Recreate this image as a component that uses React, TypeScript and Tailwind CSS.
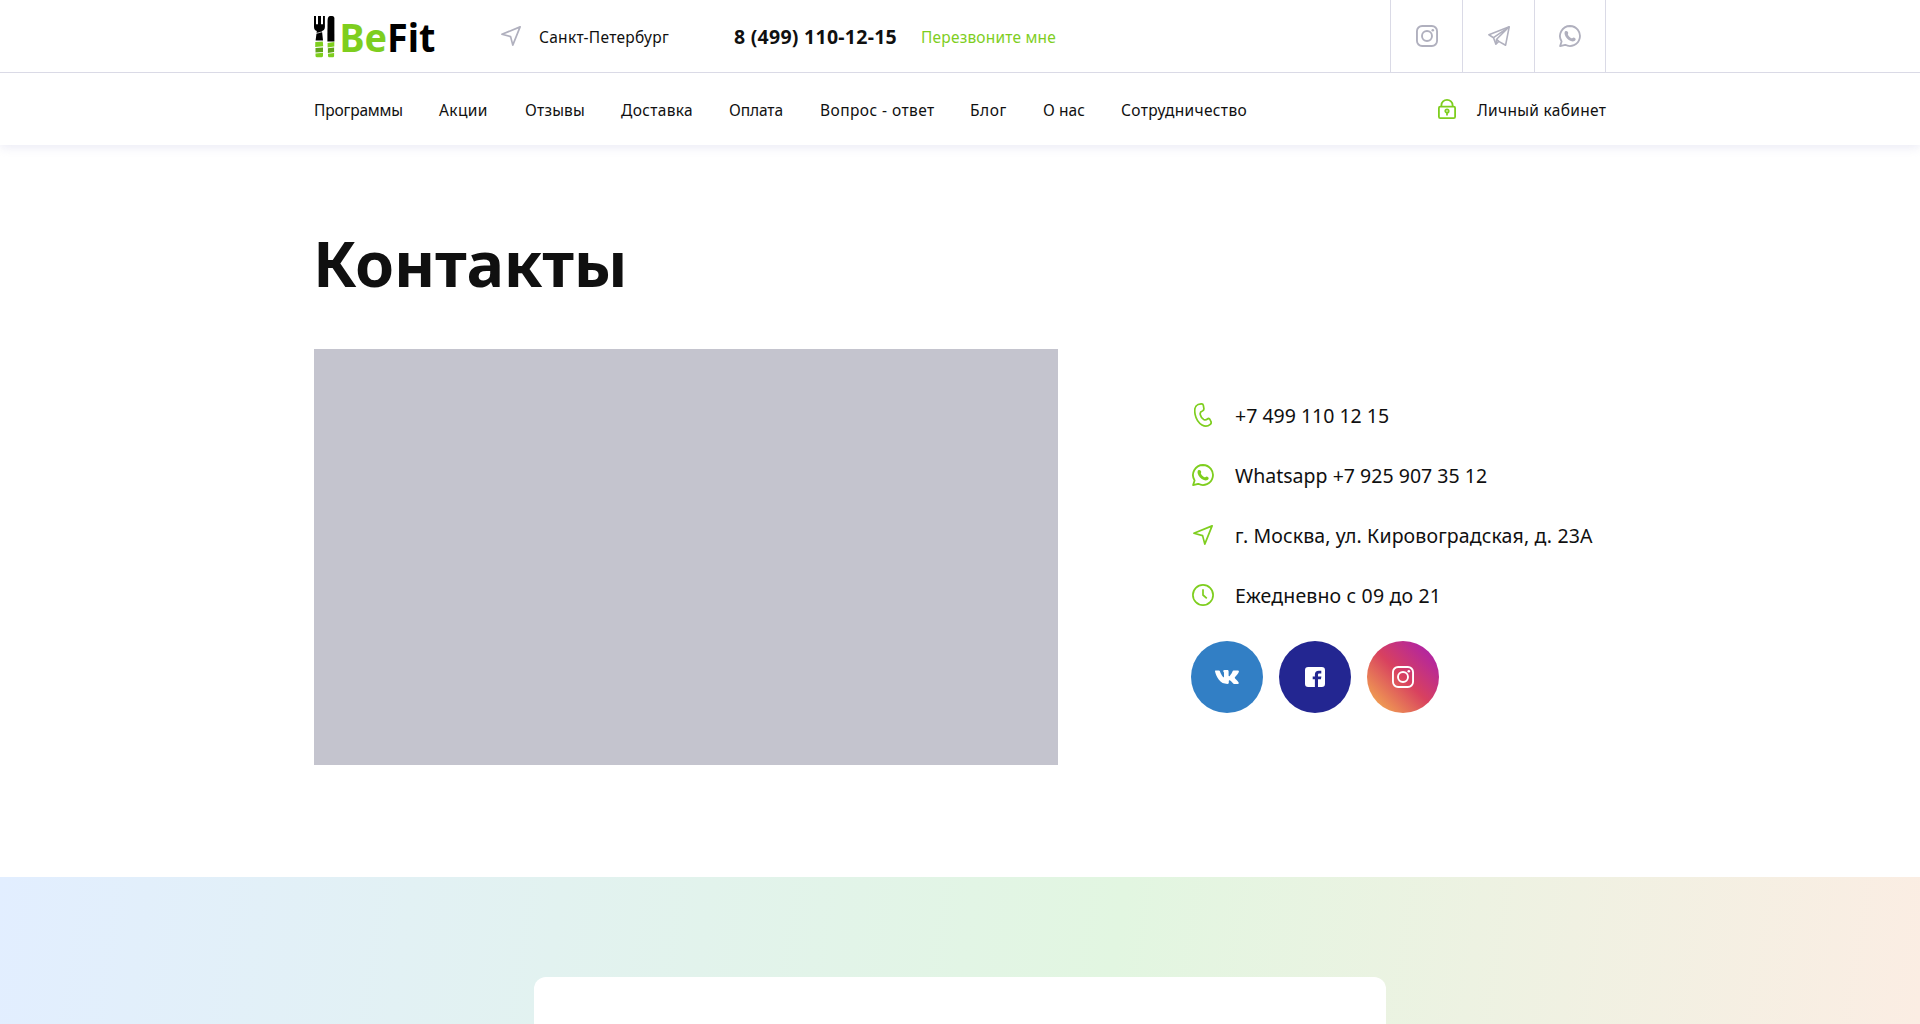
import type { ReactNode } from 'react';

function Instagram() {
  return (
    <svg width="22" height="22" viewBox="0 0 22 22" fill="none" stroke="currentColor" strokeWidth="1.9">
      <rect x="0.95" y="0.95" width="20.1" height="20.1" rx="5.2" />
      <circle cx="11" cy="11" r="5" />
      <circle cx="16.8" cy="5.2" r="1.3" fill="currentColor" stroke="none" />
    </svg>
  );
}

function Whatsapp() {
  return (
    <svg width="22" height="22" viewBox="0 0 22 22" fill="none">
      <path
        d="M11 1A10 10 0 1 1 6.2 19.8L1.1 21.1L2.6 16.4A10 10 0 0 1 11 1Z"
        stroke="currentColor"
        strokeWidth="1.8"
        strokeLinejoin="round"
      />
      <path
        d="M6.6 6.1C8 5.4 9.4 7.2 9.2 8.2C9 9.2 8.6 9.4 9.2 10.3C10 11.8 11.2 12.8 12.5 13.2C13.3 13.5 13.7 12.5 14.6 12.4C15.5 12.3 17.1 13.5 16.6 14.7C15.9 16.3 13.9 16.8 11.9 16C8.8 14.9 6.7 12.5 5.8 9.8C5.3 8.2 5.5 6.7 6.6 6.1Z"
        fill="currentColor"
      />
    </svg>
  );
}

function Telegram() {
  return (
    <svg width="22" height="20" viewBox="0 0 22 20" fill="none" stroke="currentColor" strokeWidth="1.6" strokeLinejoin="round">
      <path d="M21.2 0.8L0.9 8.8L5.5 11.7L7.9 18.1L10.7 15.4L17.6 19.2Z" />
      <path d="M21.2 0.8L5.5 11.7M21.2 0.8L8.6 13.3L7.9 18.1M8.6 13.3L10.7 15.4" />
    </svg>
  );
}

function Location() {
  return (
    <svg width="20" height="20" viewBox="0 0 20 20" fill="none" stroke="currentColor" strokeWidth="1.7" strokeLinejoin="round">
      <path d="M19.1 0.9L0.9 8.3L9.6 10.6L11.8 19.1Z" />
    </svg>
  );
}

function Lock() {
  return (
    <svg width="18" height="20" viewBox="0 0 18 20" fill="none" stroke="currentColor" strokeWidth="1.8">
      <rect x="0.9" y="7.7" width="16.2" height="11.4" rx="1.4" />
      <path d="M3.4 7.8V6.2A5.6 5.3 0 0 1 14.6 6.2V7.8" />
      <circle cx="9" cy="12" r="1.7" />
      <path d="M9 13.6V16.6" />
    </svg>
  );
}

function Phone() {
  return (
    <svg width="18" height="24" viewBox="0 0 18 24" fill="none" stroke="currentColor" strokeWidth="1.7" strokeLinejoin="round">
      <path d="M4.1 1.5L7.2 0.9C8.5 0.7 9.2 1.5 9.4 2.6L9.9 5.6C10 6.9 9.4 7.6 8.4 8C6.5 8.7 5.8 9.8 6.3 11.7C6.8 13.7 8.1 15.6 9.7 16.5C11.2 17.3 12.3 17 13.4 16C14.2 15.3 15 15.4 15.7 16.1L16.8 18.2C17.5 19.4 17.2 20.5 16.3 21.3C13.9 23.4 10.8 23.6 8 21.9C4.7 19.9 2 15.7 1.1 11.3C0.3 7.3 0.9 2.9 4.1 1.5Z" />
    </svg>
  );
}

function Clock() {
  return (
    <svg width="22" height="22" viewBox="0 0 22 22" fill="none" stroke="currentColor" strokeWidth="1.7">
      <circle cx="11" cy="11" r="10.1" />
      <path d="M11 5.3V11L14.8 14.4" />
    </svg>
  );
}

function Vk() {
  return (
    <svg width="24" height="14" viewBox="0 0 24 14" fill="currentColor">
      <path d="M0.4 0.6H3.9C4.5 0.6 4.7 0.8 4.9 1.3C5.7 3.5 7 6.1 8.1 7.1C8.6 7.5 9 7.2 9 6.4V3.3C9 2 8.6 1.5 7.9 1.3C8.1 0.5 9.1 0 10.6 0H12.3C13.3 0 13.6 0.5 13.6 1.5V5.5C13.6 6.3 14.1 6.5 14.7 5.9C15.9 4.7 17 2.9 17.6 1.3C17.8 0.8 18 0.6 18.6 0.6H22.9C23.9 0.6 24.1 1.1 23.8 1.9C23.2 3.3 21.6 5.4 20.1 7.1C19.6 7.7 19.6 7.9 20.1 8.5C21.3 9.8 23 11.3 23.6 12.6C24 13.4 23.6 13.9 22.7 13.9H19.2C18.1 13.9 17.5 12.8 16.1 11.3C14.7 9.8 13.8 9.8 13.8 11.5V12.8C13.8 13.6 13.5 13.9 12.4 13.9C8.9 13.9 6 12.9 3.7 9.6C1.8 6.9 0.6 4.1 0.1 1.8C-0.1 1 0 0.6 0.4 0.6Z" />
    </svg>
  );
}

function Facebook() {
  return (
    <svg width="20" height="20" viewBox="0 0 20 20" fill="currentColor">
      <path d="M3.2 0H16.8A3.2 3.2 0 0 1 20 3.2V16.8A3.2 3.2 0 0 1 16.8 20H13V12.2H15.9L16.4 9.4H13V7.7C13 6.8 13.5 6.4 14.4 6.4H16.3V3.8H13.7C11.2 3.8 9.9 5.2 9.9 7.5V9.4H7.7V12.2H9.9V20H3.2A3.2 3.2 0 0 1 0 16.8V3.2A3.2 3.2 0 0 1 3.2 0Z" />
    </svg>
  );
}

function Logo() {
  return (
    <svg width="122" height="44" viewBox="0 0 122 44" className="overflow-visible">
      <path d="M0 0H2V8.2H4V0H7V8.2H9V0H10.9V11C10.9 13.4 9.6 14.6 8 14.9L9 24.6H1.6L2.8 14.9C1.2 14.6 0 13.4 0 11Z" fill="#000" />
      <path d="M16.2 0H18.2C19.6 0 20.4 1 20.4 2.4V25.4H13.4V18L13.6 4C13.8 1.6 14.6 0 16.2 0Z" fill="#000" />
      <g fill="#7ece1e">
        <path d="M1.3 26L8.8 25.4L9.2 30.3L1.2 31Z" />
        <path d="M1.5 37.5L9 36.8V39.8C9 40.7 8.5 41.2 7.7 41.2H2.8C2 41.2 1.5 40.7 1.5 39.8Z" />
        <path d="M13.6 27L20.3 26V30.5L13.6 31.4Z" />
        <path d="M14 37.8L20.1 37V39.7C20.1 40.7 19.4 41.2 18.6 41.2H15.6C14.6 41.2 14 40.7 14 39.7Z" />
      </g>
      <g fill="#61a31a">
        <path d="M1.5 32L9 31.4V35.9L1.5 36.5Z" />
        <path d="M13.9 32.3L20.1 31.4V36.1L13.9 36.9Z" />
      </g>
      <path d="M0 18L11 15" stroke="#fff" strokeWidth="0.7" />
      <text
        x="25.5"
        y="36"
        textLength="96"
        lengthAdjust="spacingAndGlyphs"
        fontSize="38.5"
        className="font-['Noto_Sans',sans-serif] font-bold"
      >
        <tspan fill="#7ece1e">Be</tspan><tspan fill="#000">Fit</tspan>
      </text>
    </svg>
  );
}

const nav = [
  { label: 'Программы', cls: 'w-[89px] tracking-[-0.16px]' },
  { label: 'Акции', cls: 'w-[50px] tracking-[0.4px]' },
  { label: 'Отзывы', cls: 'w-[60px] tracking-[0.19px]' },
  { label: 'Доставка', cls: 'w-[72px] tracking-[0.34px]' },
  { label: 'Оплата', cls: 'w-[55px] tracking-[-0.1px]' },
  { label: 'Вопрос - ответ', cls: 'w-[114px] tracking-[0.44px]' },
  { label: 'Блог', cls: 'w-[37px] tracking-[0.6px]' },
  { label: 'О нас', cls: 'w-[42px] tracking-[0.05px]' },
  { label: 'Сотрудничество', cls: 'w-[127px] tracking-[0.34px]' },
];

const contacts: { icon: ReactNode; label: string; cls: string }[] = [
  { icon: <Phone />, label: '+7 499 110 12 15', cls: 'tracking-[0px]' },
  { icon: <Whatsapp />, label: 'Whatsapp +7 925 907 35 12', cls: 'tracking-[0.02px]' },
  { icon: <Location />, label: 'г. Москва, ул. Кировоградская, д. 23А', cls: 'tracking-[0.13px]' },
  { icon: <Clock />, label: 'Ежедневно с 09 до 21', cls: 'tracking-[0.16px]' },
];

export default function App() {
  return (
    <div className="h-[1024px] overflow-hidden bg-white font-['Noto_Sans',sans-serif] text-[15.5px] text-[#101010]">
      <header className="h-[145px] shadow-[0_2px_10px_rgba(218,218,236,0.6)]">
        <div className="h-[73px] border-b border-[#dadae6]">
          <div className="mx-auto flex h-full w-[1292px] items-center whitespace-nowrap">
            <a href="#" className="mt-[3px] w-[187px]">
              <Logo />
            </a>
            <span className="w-[38px] text-[#b0b0be]">
              <Location />
            </span>
            <span className="mt-1 w-[195px] tracking-[0.28px]">Санкт-Петербург</span>
            <a href="#" className="mt-0.5 w-[187px] text-[19.5px] font-bold tracking-[0.26px]">
              8 (499) 110-12-15
            </a>
            <a href="#" className="mt-1 tracking-[0.19px] text-[#7ece1e]">
              Перезвоните мне
            </a>
            <div className="ml-auto flex h-full border-r border-[#dadae6] text-[#b0b0be]">
              <a href="#" className="flex w-[72px] items-center justify-center border-l border-[#dadae6]">
                <Instagram />
              </a>
              <a href="#" className="flex w-[72px] items-center justify-center border-l border-[#dadae6]">
                <Telegram />
              </a>
              <a href="#" className="flex w-[71px] items-center justify-center border-l border-[#dadae6]">
                <Whatsapp />
              </a>
            </div>
          </div>
        </div>
        <div className="mx-auto flex h-[72px] w-[1292px] items-center whitespace-nowrap">
          <nav className="mt-1 flex gap-9">
            {nav.map((item) => (
              <a key={item.label} href="#" className={item.cls}>
                {item.label}
              </a>
            ))}
          </nav>
          <a href="#" className="ml-auto flex items-center">
            <span className="mr-[21px] text-[#7ece1e]">
              <Lock />
            </span>
            <span className="mt-1 w-[129px] tracking-[0.3px]">Личный кабинет</span>
          </a>
        </div>
      </header>

      <main>
        <section className="mx-auto h-[732px] w-[1292px] pt-[78px]">
          <h1 className="-ml-px text-[63px] leading-[80px] font-bold tracking-[-0.3px]">Контакты</h1>
          <div className="mt-[46px] flex">
            <div className="h-[416px] w-[744px] bg-[#c4c4ce]" />
            <div className="ml-[133px] pt-9">
              <ul>
                {contacts.map((c) => (
                  <li key={c.label} className="flex h-[60px] items-center text-[19.5px] whitespace-nowrap">
                    <span className="mr-5 flex w-6 justify-center text-[#7ece1e]">{c.icon}</span>
                    <span className={`mt-px ${c.cls}`}>{c.label}</span>
                  </li>
                ))}
              </ul>
              <div className="mt-4 flex gap-4 text-white">
                <a href="#" className="flex size-[72px] items-center justify-center rounded-full bg-[#327fc5]">
                  <Vk />
                </a>
                <a href="#" className="flex size-[72px] items-center justify-center rounded-full bg-[#232691]">
                  <Facebook />
                </a>
                <a
                  href="#"
                  className="flex size-[72px] items-center justify-center rounded-full bg-[linear-gradient(45deg,#f5b050_5%,#d8415f_50%,#a91eb0_95%)]"
                >
                  <Instagram />
                </a>
              </div>
            </div>
          </div>
        </section>
        <section className="h-[147px] bg-[linear-gradient(98.5deg,#e2eeff_0%,#e2f6e1_58%,#fbede3_100%)] pt-[100px]">
          <div className="mx-auto h-full w-[852px] rounded-t-xl bg-white" />
        </section>
      </main>
    </div>
  );
}
